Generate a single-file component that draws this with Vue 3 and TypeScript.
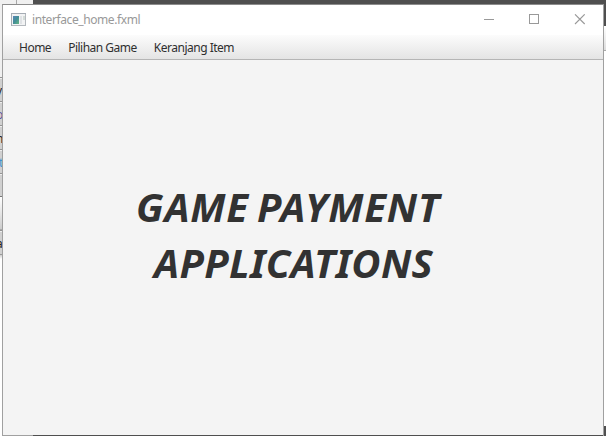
<script setup lang="ts">
interface BackdropRow { kind: string; glyph?: string; tone?: string }

const menus: string[] = ['Home', 'Pilihan Game', 'Keranjang Item']
const lines: string[] = ['GAME PAYMENT', 'APPLICATIONS']
const rows: BackdropRow[] = [
  { kind: 'cell', glyph: 'v', tone: 'dark' },
  { kind: 'cell', glyph: 'o', tone: 'violet' },
  { kind: 'cell', glyph: 'n', tone: 'dark' },
  { kind: 'cell', glyph: 't', tone: 'blue' },
  { kind: 'cell last' },
  { kind: 'header' },
  { kind: 'cell', glyph: 'a', tone: 'dark' },
]
</script>

<template>
  <div class="desktop">
    <div class="left-strip">
      <div class="left-top"></div>
      <div v-for="(row, i) in rows" :key="i" class="row" :class="row.kind">
        <span v-if="row.glyph" :class="row.tone">{{ row.glyph }}</span>
      </div>
      <div class="left-rest"></div>
    </div>
    <div class="right-strip">
      <div class="right-header"></div>
      <div class="right-body"></div>
    </div>

    <main class="window">
      <header class="titlebar">
        <svg class="app-icon" width="15" height="13" viewBox="0 0 15 13">
          <defs>
            <linearGradient id="screen" x1="0" y1="0" x2="1" y2="1">
              <stop offset="0" stop-color="#5b86b8" />
              <stop offset=".5" stop-color="#438e96" />
              <stop offset="1" stop-color="#66b783" />
            </linearGradient>
          </defs>
          <rect x=".5" y=".5" width="14" height="12" fill="#f2f3f4" stroke="#b3b8bd" />
          <path d="M0 .5h15M.5 0v13" stroke="#a5acb4" />
          <rect x="2" y="3" width="6" height="8" fill="url(#screen)" />
          <rect x="9" y="3" width="2" height="8" fill="#dfe2e5" />
          <rect x="12" y="3" width="2" height="4" fill="#d4dcd8" />
        </svg>
        <span class="title">interface_home.fxml</span>
        <svg class="controls" width="102" height="11" viewBox="0 0 102 11" fill="none" stroke="#999">
          <path d="M0 5.5h10" />
          <rect x="45.5" y=".5" width="9" height="9" />
          <path d="M91 .3l9.7 9.7M100.7 .3l-9.7 9.7" stroke-width="1.1" />
        </svg>
      </header>
      <nav class="menubar">
        <span v-for="m in menus" :key="m" class="menu">{{ m }}</span>
      </nav>
      <section class="content">
        <h1><span v-for="(l, i) in lines" :key="l" :class="`line l${i}`">{{ l }}</span></h1>
      </section>
    </main>
  </div>
</template>

<style>
body { overflow: hidden; }
</style>

<style scoped>
* { box-sizing: border-box; }
.desktop {
  position: relative;
  width: 606px;
  height: 436px;
  overflow: hidden;
  display: flex;
  justify-content: space-between;
  background: #4f4f4f;
  font-family: "Noto Sans", "Open Sans", sans-serif;
}
.left-strip { width: 33px; height: 436px; background: #fff; }
.left-top {
  height: 77px;
  background: linear-gradient(90deg, #f0f0f0 16px, #a8a8a8 16px 17px, #f0f0f0 17px);
}
.row { width: 33px; font-size: 12px; line-height: 25px; }
.cell { height: 24px; background: #d0d0d0; border-top: 1px solid #949494; box-shadow: inset 0 1px #eee; }
.cell.last { height: 23px; }
.cell span { display: block; margin-left: -4px; }
.cell span.blue { margin-left: -1px; }
.header { height: 34px; border-top: 1px solid #777; border-bottom: 1px solid #aaa; background: linear-gradient(#fff, #ccc); }
.dark { color: #222; }
.violet { color: #5d559c; }
.blue { color: #3d94d0; }
.left-rest { height: 5px; border-top: 1px solid #999; background: linear-gradient(#ccc, #fff); }
.right-strip { width: 3px; height: 400px; margin-top: 26px; background: #fff; }
.right-header { height: 25px; border-bottom: 1px solid #aaa; background: linear-gradient(#fff, #ddd); }
.right-body { height: 375px; background: #fff; }
.window {
  position: absolute;
  left: 2px;
  top: 4px;
  width: 602px;
  height: 432px;
  display: flex;
  flex-direction: column;
  border: 1px solid #a0a0a0;
  border-top-color: #8c8c8c;
  border-bottom: 0;
  background: #f4f4f4;
}
.window::after {
  content: "";
  height: 1px;
  background: linear-gradient(90deg, #a0a0a0 30px, #4f4f4f 30px);
}
.titlebar { height: 30px; display: flex; align-items: center; background: #fff; padding-left: 8px; }
.app-icon { margin-top: -1px; }
.title { margin-left: 6px; font: 12px/18px "Noto Sans", "Open Sans", sans-serif; color: #999; letter-spacing: -.41px; }
.controls { margin-left: auto; margin-right: 17px; margin-top: -1px; }
.menubar {
  height: 25px;
  display: flex;
  align-items: center;
  padding: 2px 0 0 16px;
  gap: 17px;
  background: linear-gradient(#fcfcfc, #e4e4e4);
  border-bottom: 1px solid #b5b5b5;
}
.menu { font-size: 12px; line-height: 18px; color: #2f2f2f; white-space: nowrap; letter-spacing: -.5px; }
.content { flex: 1; padding-top: 119px; }
h1 { margin: 0; font: italic 700 40px/56px "Noto Sans", "Open Sans", sans-serif; color: #323232; }
.line { display: block; width: max-content; white-space: nowrap; }
.l0 { margin-left: 133px; letter-spacing: .8px; word-spacing: -3px; }
.l1 { margin-left: 151px; letter-spacing: .35px; }
</style>
